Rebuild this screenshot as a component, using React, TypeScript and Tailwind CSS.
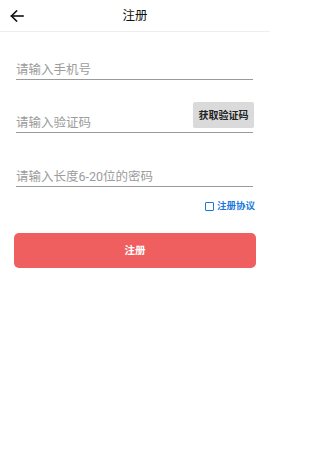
import React from "react";

export default function App() {
  const font = { fontFamily: 'Roboto, "Noto Sans CJK SC", "Noto Sans", sans-serif' };
  return (
    <div className="w-[270px] h-[450px] bg-white relative" style={font}>
      <div className="h-[32px] border-b border-[#eeeeee] flex items-center relative">
        <div className="absolute left-[10px] top-[10px]">
          <svg width="14" height="12" viewBox="0 0 14 12" fill="none" stroke="#111" strokeWidth="1.6" strokeLinecap="square">
            <path d="M1.5 6H13" />
            <path d="M6.5 1L1.5 6L6.5 11" strokeLinejoin="miter" />
          </svg>
        </div>
        <div className="flex-1 text-center text-[12.5px] leading-[18px] text-[#111]">注册</div>
      </div>

      <div className="pl-[16px] pr-[17px]">
        <div className="mt-[29px] h-[19px] border-b border-[#9a9a9a] flex items-end">
          <span className="text-[12.5px] leading-[18px] text-[#9c9c9c]">请输入手机号</span>
        </div>

        <div className="mt-[22px] h-[31px] border-b border-[#9a9a9a] flex items-end">
          <span className="flex-1 text-[12.5px] leading-[18px] text-[#9c9c9c]">请输入验证码</span>
          <div className="mb-[4px] mr-[-1px] w-[61px] h-[26px] bg-[#dadada] rounded-[2px] flex items-center justify-center text-[10px] text-[#222] font-bold">
            获取验证码
          </div>
        </div>

        <div className="mt-[35px] h-[19px] border-b border-[#9a9a9a] flex items-end">
          <span className="text-[12.5px] leading-[18px] text-[#9c9c9c]">请输入长度6-20位的密码</span>
        </div>

        <div className="mt-[13px] flex justify-end items-center mr-[-2px] gap-[3px]">
          <div className="w-[9px] h-[9px] border border-[#1a78db] rounded-[1px]" />
          <span className="text-[9.5px] leading-[12px] text-[#1a78db] font-bold">注册协议</span>
        </div>
      </div>

      <div className="mx-[14px] mt-[21px] h-[35px] rounded-[5px] bg-[#f05f60] flex items-center justify-center text-white text-[10.5px] font-bold">
        注册
      </div>
    </div>
  );
}
